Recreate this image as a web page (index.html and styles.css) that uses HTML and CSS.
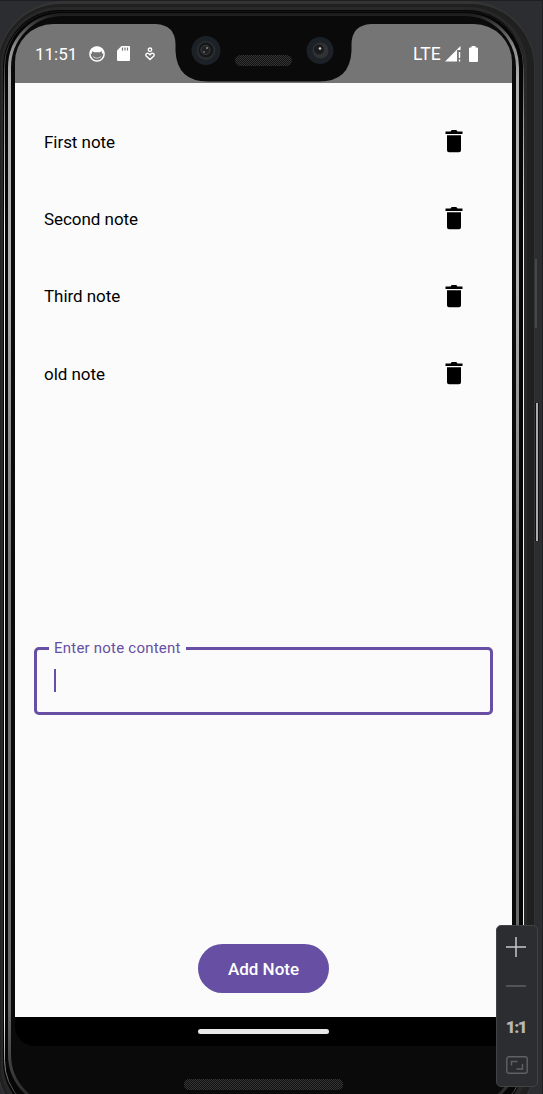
FILE: index.html
```html
<!DOCTYPE html>
<html lang="en">
<head>
<meta charset="utf-8">
<title>Notes</title>
<link rel="stylesheet" href="styles.css">
</head>
<body>
<div class="emulator">
  <svg class="shell" width="543" height="1094" viewBox="0 0 543 1094" fill="none">
    <defs>
      <linearGradient id="rim" x1="0" y1="14" x2="0" y2="1094" gradientUnits="userSpaceOnUse">
        <stop offset="0" stop-color="#1c1c1c"/><stop offset=".03" stop-color="#8c8c8c"/><stop offset=".06" stop-color="#b0b0b0"/>
        <stop offset=".25" stop-color="#b0b0b0"/><stop offset=".5" stop-color="#777"/><stop offset=".92" stop-color="#666"/><stop offset="1" stop-color="#2b2b2b"/>
      </linearGradient>
      <linearGradient id="line" x1="0" y1="10" x2="0" y2="1094" gradientUnits="userSpaceOnUse">
        <stop offset="0" stop-color="#111"/><stop offset=".05" stop-color="#444"/><stop offset=".1" stop-color="#999"/><stop offset=".2" stop-color="#f4f4f4"/>
        <stop offset=".93" stop-color="#f4f4f4"/><stop offset="1" stop-color="#444"/>
      </linearGradient>
      <pattern id="mesh" width="2" height="2" patternUnits="userSpaceOnUse">
        <rect width="2" height="2" fill="#101010"/><path d="M0 0h1v1H0zM1 1h1v1H1z" fill="#363636"/>
      </pattern>
    </defs>
    <rect x="-3" y="1" width="538" height="1130" rx="66" fill="#343434"/>
    <rect x="-2" y="4" width="536" height="1124" rx="63" fill="#202020"/>
    <rect x="1" y="7" width="526" height="1118" rx="59" fill="#282828"/>
    <rect x="3" y="10" width="521" height="1109" rx="57" fill="#060606"/>
    <rect x="4.500" y="11.500" width="519" height="1104" rx="55" fill="#060606" stroke="url(#line)"/>
    <rect x="9.500" y="14.500" width="508" height="1093" rx="53" fill="#0a0a0a" stroke="url(#rim)" stroke-width="3"/>
    <path d="M536 259v69" stroke="#484848" stroke-width="2"/>
    <path d="M537 403v138" stroke="#111" stroke-width="4"/>
    <path d="M537 403v138" stroke="#aaa" stroke-width="2"/>
    <rect x="184" y="1079" width="159" height="11" rx="5" fill="url(#mesh)"/>
    <path d="M542.500 0v1094M0 .5h543" stroke="#1e1f22"/>
  </svg>
  <main class="screen">
    <header class="status">
      <span class="clock">11:51</span>
      <svg class="i-face" width="16" height="16" viewBox="0 0 16 16"><circle cx="8" cy="8" r="7.100" fill="none" stroke="#fff" stroke-width="1.500"/><path d="M1 7C1 3 4 .8 8 .8S15 3 15 7l-1.500 1-1-3L11 6.300H5L3.500 5 2.500 8z" fill="#fff"/><path d="M4 10.500q4 3.500 8 0" stroke="#ccc" fill="none"/></svg>
      <svg class="i-card" width="13" height="15" viewBox="0 0 13 15"><path d="M4.500 0H12q1 0 1 1v13q0 1-1 1H1q-1 0-1-1V4.500z" fill="#fff"/><path d="M5.500 1.500v3M8 1.500v3M10.500 1.500v3" stroke="#757575" stroke-width="1.200"/></svg>
      <svg class="i-heart" width="10" height="14" viewBox="0 0 10 14" fill="none" stroke="#fff" stroke-width="1.400"><circle cx="5" cy="2.700" r="1.700"/><path d="M5 12.500 1.200 9Q.3 7.300 1.600 6.500 3.300 5.500 5 7.700 6.700 5.500 8.400 6.500 9.700 7.300 8.800 9z"/></svg>
      <span class="lte">LTE</span>
      <svg class="i-signal" width="16" height="16" viewBox="0 0 16 16"><path d="M0 15.500 15.500 0v4H12v11.500z" fill="#fff"/><path d="M14.500 6v6M14.500 13.500v2" stroke="#fff" stroke-width="1.400"/></svg>
      <svg class="i-battery" width="9" height="16" viewBox="0 0 9 16"><path d="M2.500 0h4v1.500H8q1 0 1 1V15q0 1-1 1H1q-1 0-1-1V2.500q0-1 1-1h1.500z" fill="#fff"/></svg>
    </header>
    <section class="content">
      <ul class="notes">
        <li class="note"><span class="text">First note</span><svg class="bin" width="18" height="23" viewBox="0 0 18 23"><path d="M.5 1.500h5L6.700 0h4.600l1.200 1.500h5V4H.5zM2 5.300h14v15q0 2-2 2H4q-2 0-2-2z"/></svg></li>
        <li class="note"><span class="text">Second note</span><svg class="bin" width="18" height="23" viewBox="0 0 18 23"><path d="M.5 1.500h5L6.700 0h4.600l1.200 1.500h5V4H.5zM2 5.300h14v15q0 2-2 2H4q-2 0-2-2z"/></svg></li>
        <li class="note"><span class="text">Third note</span><svg class="bin" width="18" height="23" viewBox="0 0 18 23"><path d="M.5 1.500h5L6.700 0h4.600l1.200 1.500h5V4H.5zM2 5.300h14v15q0 2-2 2H4q-2 0-2-2z"/></svg></li>
        <li class="note"><span class="text">old note</span><svg class="bin" width="18" height="23" viewBox="0 0 18 23"><path d="M.5 1.500h5L6.700 0h4.600l1.200 1.500h5V4H.5zM2 5.300h14v15q0 2-2 2H4q-2 0-2-2z"/></svg></li>
      </ul>
      <div class="field"><label class="label">Enter note content</label><span class="caret"></span></div>
      <button class="add">Add Note</button>
    </section>
    <footer class="nav"><span class="handle"></span></footer>
  </main>
  <svg class="notch" width="228" height="60" viewBox="150 23 228 60">
    <path d="M150 23H378V24H371Q352 25 351.500 44V51Q350 81.500 319 81.500H208Q177 81.500 175.500 51V44Q175 25 156 24H150z" fill="#0a0a0a"/>
    <circle cx="206" cy="50.500" r="14.500" fill="#1b2126"/><circle cx="206" cy="50.500" r="9.500" fill="#2b2d2f"/><circle cx="206" cy="50" r="7.500" fill="#161718"/><circle cx="205.500" cy="50" r="4.500" fill="#1f2022" stroke="#3d4042"/><circle cx="207" cy="48" r="1" fill="#888"/><circle cx="204" cy="52" r="1" fill="#666"/>
    <circle cx="320" cy="50.500" r="13.500" fill="#1b2126"/><circle cx="320.500" cy="50.500" r="8" fill="#303234"/><circle cx="319" cy="49.500" r="5" fill="#1a1b1c"/><circle cx="320" cy="48.500" r="1.300" fill="#ccc"/>
    <rect x="235" y="55" width="57" height="11" rx="5.500" fill="url(#mesh)"/>
  </svg>
  <aside class="zoom">
    <svg class="plus" width="20" height="20" viewBox="0 0 20 20"><path d="M0 10h20M10 0v20" stroke="#c8c8c8" stroke-width="1.500"/></svg>
    <svg class="minus" width="20" height="2" viewBox="0 0 20 2"><path d="M0 1h20" stroke="#606163" stroke-width="1.500"/></svg>
    <span class="ratio">1:1</span>
    <svg class="fit" width="22" height="18" viewBox="0 0 22 18" fill="none" stroke="#606163" stroke-width="1.400"><rect x=".8" y=".8" width="20.400" height="16.400" rx="2"/><path d="M5.500 9.500v-4h6M16.500 8v5h-6"/></svg>
  </aside>
</div>
</body>
</html>
```
FILE: styles.css
```css
* { box-sizing: border-box; }
body { margin: 0; background: #2b2d30; font-family: Roboto, "Liberation Sans", sans-serif; }
.emulator { position: relative; width: 543px; height: 1094px; padding: 24px 31px 48px 15px; overflow: hidden; }
.shell { position: absolute; left: 0; top: 0; }
.screen { position: relative; display: flex; flex-direction: column; width: 497px; height: 1022px; border-radius: 38px 38px 20px 20px; overflow: hidden; }
.status { display: flex; align-items: center; height: 59px; padding: 0 34px 0 20px; background: #757575; color: #fff; flex: none; }
.clock { width: 54px; font-size: 17px; line-height: 20px; }
.i-card { margin-left: 12px; }
.i-heart { margin-left: 15px; }
.lte { margin-left: auto; font-size: 17.500px; line-height: 20px; letter-spacing: .2px; }
.i-signal { margin-left: 4px; }
.i-battery { margin-left: 8px; }
.content { display: flex; flex-direction: column; flex: 1; min-height: 0; background: #fbfbfb; }
.notes { list-style: none; margin: 20px 0 0; padding: 0 49px 0 29px; height: 537px; flex: none; }
.note { display: flex; align-items: center; justify-content: space-between; height: 77.300px; font-size: 17px; color: #000; }
.text { letter-spacing: -.05px; }
.bin { display: block; }
.field { margin: 7px 19px 0; height: 68px; border: 3px solid #6750a4; border-radius: 5px; padding: 0 12px; display: flex; flex-direction: column; align-items: flex-start; flex: none; }
.label { margin-top: -12px; padding: 0 5px; background: #fbfbfb; color: #6750a4; font-size: 15px; line-height: 20px; letter-spacing: .22px; white-space: nowrap; }
.caret { width: 2px; height: 23px; margin: 11px 0 0 5px; background: #6750a4; }
.add { width: 131px; height: 49px; margin: auto auto 24px; border: 0; border-radius: 25px; background: #6750a4; color: #fff; font: 500 17px Roboto, sans-serif; flex: none; }
.nav { display: flex; justify-content: center; height: 29px; padding-top: 12px; background: #000; flex: none; }
.handle { width: 131px; height: 5px; border-radius: 3px; background: #e8e8e8; }
.notch { position: absolute; left: 150px; top: 23px; }
.zoom { position: absolute; left: 496px; top: 925px; width: 42px; height: 162px; display: flex; flex-direction: column; align-items: center; padding: 11px 2px 0 0; background: #2b2d30; border: 1px solid #414345; border-radius: 5px; }
.minus { margin-top: 28px; }
.ratio { margin-top: 30px; font: 900 17px/20px "Roboto", sans-serif; letter-spacing: -1.500px; color: #b8b8b8; }
.fit { margin: 19px 0 0 2px; }
```
